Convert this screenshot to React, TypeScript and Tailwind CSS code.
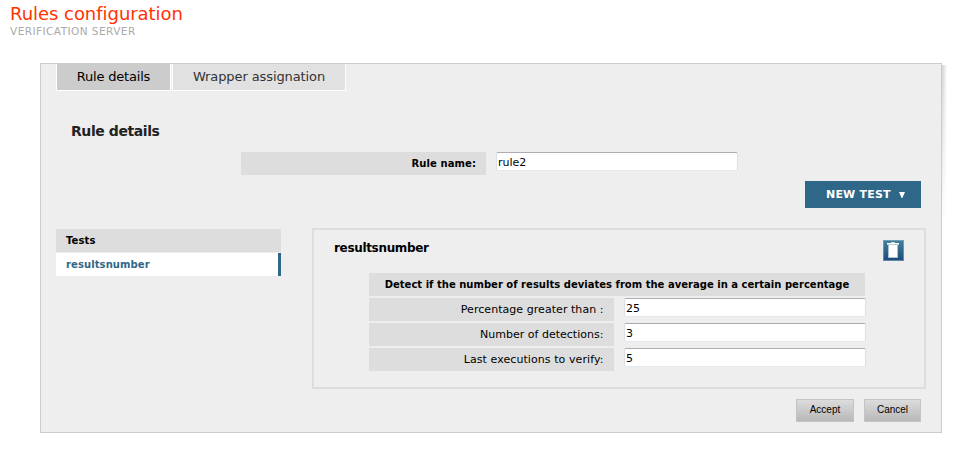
import React from "react";

const sans = "font-['Verdana','DejaVu_Sans',sans-serif]";

function Field({ value }: { value: string }) {
  return (
    <input
      defaultValue={value}
      className="block h-[19px] w-[242px] rounded-[2px] border border-[#e3e9ef] border-t-[#abadb3] border-x-[#dcdfe8] bg-white px-px pt-px text-[11px] leading-[14px] text-black outline-none"
    />
  );
}

function Trash() {
  return (
    <svg width="21" height="21" viewBox="0 0 21 21" className="block" shapeRendering="crispEdges">
      <defs>
        <linearGradient id="trash" x1="0" y1="0" x2="0" y2="1">
          <stop offset="0" stopColor="#43829b" />
          <stop offset="1" stopColor="#1d4a7a" />
        </linearGradient>
      </defs>
      <rect width="21" height="21" fill="url(#trash)" />
      <rect x="0.5" y="0.5" width="20" height="20" fill="none" stroke="#8fb0c4" strokeOpacity="0.6" />
      <rect x="8" y="2" width="4" height="1" fill="#c9dbe4" />
      <rect x="4" y="3" width="12" height="1" fill="#fff" />
      <rect x="4" y="4" width="12" height="1" fill="#b8d0dc" />
      <rect x="5" y="5" width="10" height="13" fill="#a9c2d2" />
      <rect x="6" y="5" width="8" height="12" fill="#fff" />
    </svg>
  );
}

const rows = [
  { label: "Percentage greater than :", value: "25", track: "tracking-[0.05px]" },
  { label: "Number of detections:", value: "3", track: "tracking-[0.02px]" },
  { label: "Last executions to verify:", value: "5", track: "tracking-[0.08px]" },
];

export default function App() {
  return (
    <div className={`h-[451px] w-[958px] overflow-hidden bg-white whitespace-nowrap ${sans}`}>
      <header className="h-[63px] pt-[3px] pl-[10px]">
        <h1 className="text-[18px] leading-[22px] tracking-[-0.04px] text-[#ff3300]"><span>Rules configuration</span></h1>
        <p className="text-[10.5px] leading-[13px] tracking-[0.45px] text-[#aaa]"><span>VERIFICATION SERVER</span></p>
      </header>

      <main className="relative ml-[40px] h-[370px] w-[902px] border border-[#ccc] bg-[#eee]">
        <div className="absolute top-[1px] -right-[6px] h-[160px] w-[5px] bg-linear-to-r from-[#d0d0d0] to-white mask-b-from-0%" />

        <nav className="ml-[15px] flex h-[27px] gap-px text-[13px] leading-[26px]">
          <div className="w-[115px] border-x border-b border-white bg-[#ccc] text-center tracking-[-0.2px] text-black"><span>Rule details</span></div>
          <div className="w-[174px] border-x border-b border-white bg-[#e1e1e1] text-center tracking-[-0.1px] text-[#333]"><span>Wrapper assignation</span></div>
        </nav>

        <h2 className="mt-[30px] ml-[30px] h-[31px] text-[14px] leading-[20px] font-bold tracking-[-0.42px] text-[#222]"><span>Rule details</span></h2>

        <div className="ml-[200px] flex gap-[10px]">
          <div className="h-[23px] w-[245px] bg-[#ddd] pr-[10px] text-right text-[10px] leading-[23px] font-bold tracking-[0.1px] text-black"><span>Rule name:</span></div>
          <Field value="rule2" />
        </div>

        <div className="mt-[6px] mr-[20px] flex justify-end">
          <button className="flex h-[27px] w-[116px] items-center bg-[#2f6788] pl-[21px] text-[11px] font-bold text-white">
            <span className="pt-[2px] tracking-[0.2px]">NEW TEST</span>
            <svg width="6" height="6" viewBox="0 0 6 6" className="ml-2"><path d="M0 0H6L3.4 6H2.6Z" fill="#fff" /></svg>
          </button>
        </div>

        <div className="mt-[20px] flex pl-[15px]">
          <aside className="mt-px flex w-[225px] flex-col gap-px text-[10px] font-bold tracking-[0.1px]">
            <div className="h-[23px] bg-[#ddd] pl-[10px] leading-[23px] text-black"><span>Tests</span></div>
            <div className="h-[23px] border-r-3 border-[#2f6788] bg-white pl-[10px] leading-[23px] text-[#2f6788]"><span>resultsnumber</span></div>
          </aside>
          <section className="ml-[31px] h-[161px] w-[614px] border-2 border-[#ddd]">
            <div className="flex h-[43px] justify-between pt-[10px] pr-[20px] pl-[20px]">
              <h3 className="text-[12px] leading-[17px] font-bold tracking-[-0.33px] text-black"><span>resultsnumber</span></h3>
              <Trash />
            </div>
            <div className="ml-[55px] flex flex-col gap-[2px] text-[11px] text-black">
              <div className="h-[23px] w-[496px] bg-[#ddd] text-center text-[10px] leading-[23px] font-bold tracking-[0.02px]"><span>Detect if the number of results deviates from the average in a certain percentage</span></div>
              {rows.map((r) => (
                <div key={r.label} className="flex gap-[10px]">
                  <div className="h-[23px] w-[245px] bg-[#ddd] pr-[10.5px] text-right leading-[23px]"><span className={r.track}>{r.label}</span></div>
                  <Field value={r.value} />
                </div>
              ))}
            </div>
          </section>
        </div>

        <div className="mt-[10px] mr-[20px] flex justify-end gap-[10px] font-['Liberation_Sans',Arial,sans-serif] text-[10px] text-black">
          <button className="h-[23px] w-[58px] border border-[#c4c4c4] bg-linear-to-b from-[#dcdcdc] to-[#b8b8b8] pb-[2px]">Accept</button>
          <button className="h-[23px] w-[57px] border border-[#c4c4c4] bg-linear-to-b from-[#dcdcdc] to-[#b8b8b8] pb-[2px]">Cancel</button>
        </div>
      </main>
    </div>
  );
}
